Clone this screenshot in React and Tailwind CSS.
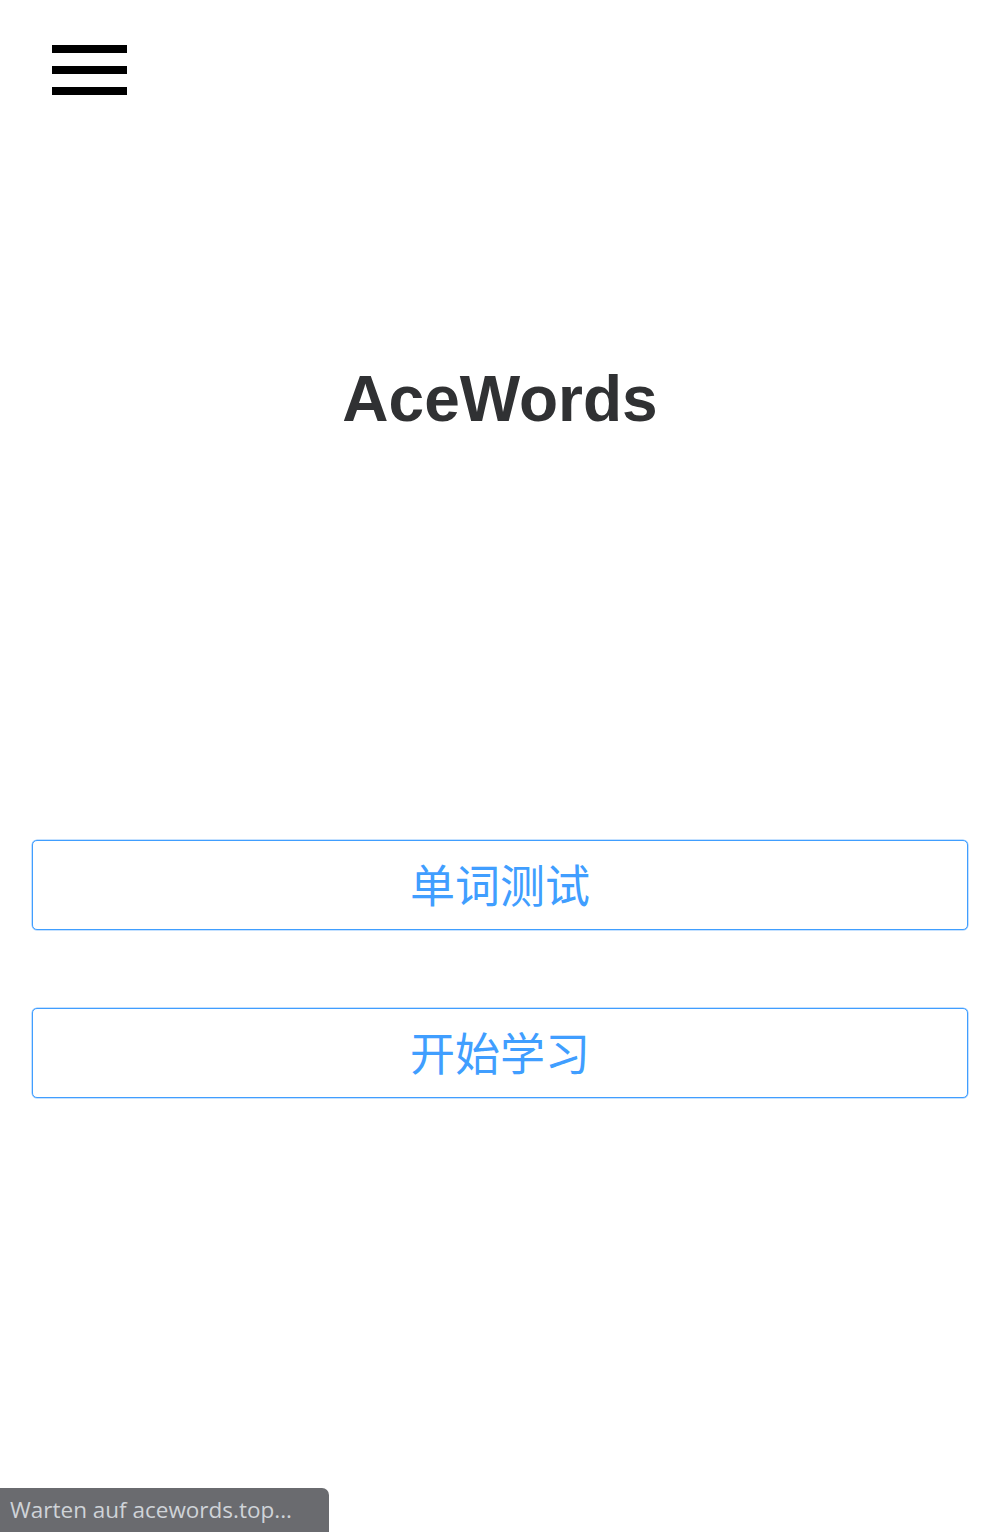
import React from "react";

const buttons = ["单词测试", "开始学习"];

const App = () => {
  return (
    <div className="relative w-full min-h-[1532px] bg-white overflow-hidden font-['Liberation_Sans',sans-serif]">
      {/* Menu toggle */}
      <header className="pt-[45px] pl-[52px]">
        <button aria-label="menu" className="flex flex-col gap-[13px] w-[75px]">
          <span className="block h-[8px] w-full bg-black" />
          <span className="block h-[8px] w-full bg-black" />
          <span className="block h-[8px] w-full bg-black" />
        </button>
      </header>

      {/* Title */}
      <h1 className="mt-[272px] text-center text-[64px] leading-none font-bold text-[#303133]">
        AceWords
      </h1>

      {/* Actions */}
      <div className="mt-[409px] px-[32px] flex flex-col gap-[78px]">
        {buttons.map((label) => (
          <button
            key={label}
            className="h-[90px] w-full pb-[4px] rounded-[5px] border border-[#409EFF] shadow-[0_0_0_0.5px_rgba(64,158,255,0.6)] bg-white text-[#409EFF] text-[45px] leading-none font-['Noto_Sans_CJK_SC',sans-serif]"
          >
            {label}
          </button>
        ))}
      </div>

      {/* Browser status bubble */}
      <div className="absolute left-0 bottom-0 w-[329px] h-[44px] bg-[#6a6b6f] rounded-tr-[7px] pl-[10px] flex items-center text-[22.5px] text-[#cfd3d8] font-['Open_Sans',sans-serif]">
        Warten auf acewords.top...
      </div>
    </div>
  );
};

export default App;
